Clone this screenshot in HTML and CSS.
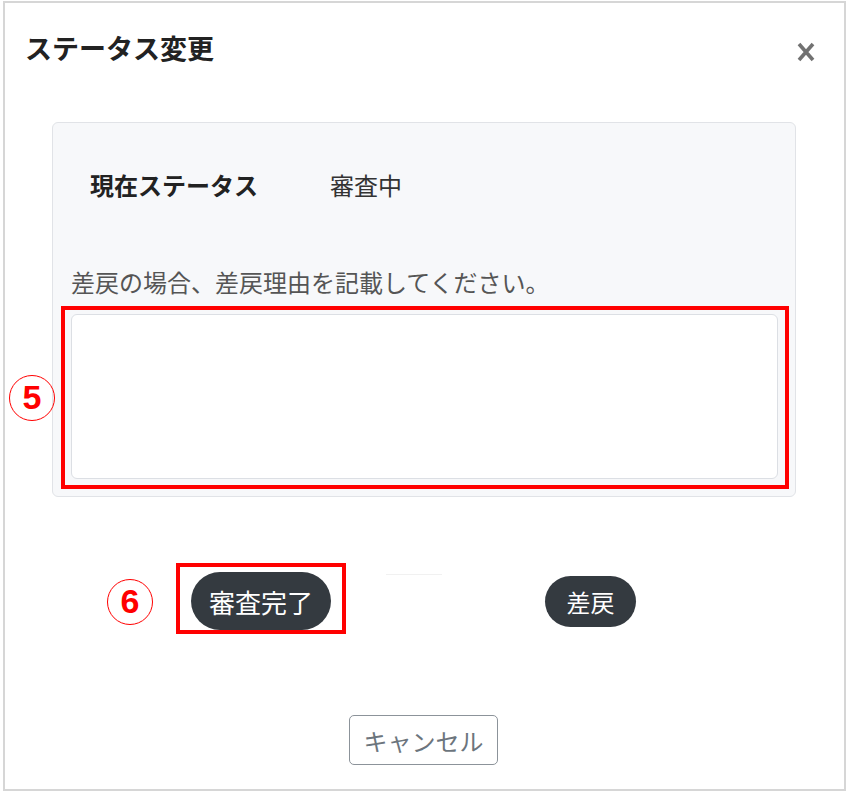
FILE: index.html
```html
<!DOCTYPE html>
<html>
<head>
  <title>ステータス変更</title>
  <link rel="stylesheet" href="styles.css">
</head>
<body>
  <div class="modal">
    <!-- Header -->
    <div class="modal-header">
      <h2 class="modal-title">ステータス変更</h2>
      <svg class="close" width="18" height="20" viewBox="0 0 18 20">
        <path d="M2 2 L16 18 M16 2 L2 18" stroke="#727272" stroke-width="3.6" stroke-linecap="butt" fill="none"/>
      </svg>
    </div>

    <!-- Status card -->
    <div class="card">
      <div class="status-row">
        <span class="status-label">現在ステータス</span>
        <span class="status-value">審査中</span>
      </div>
      <p class="note">差戻の場合、差戻理由を記載してください。</p>
      <div class="field">
        <textarea class="reason"></textarea>
        <span class="mark mark-field"></span>
        <span class="num num-5">5</span>
      </div>
    </div>

    <!-- Actions -->
    <div class="actions">
      <span class="btn-wrap">
        <button class="btn-dark btn-done">審査完了</button>
        <span class="mark mark-btn"></span>
        <span class="num num-6">6</span>
      </span>
      <span class="spacer"></span>
      <button class="btn-dark btn-back">差戻</button>
    </div>

    <div class="footer">
      <button class="btn-cancel">キャンセル</button>
    </div>
  </div>
</body>
</html>
```

FILE: styles.css
```css
* {
  box-sizing: border-box;
  font-family: "Noto Sans CJK JP", "Noto Sans", sans-serif;
}

body {
  margin: 0;
  background-color: #fff;
  color: #212529;
}

.modal {
  margin: 1px 0 0 3px;
  width: 843px;
  height: 790px;
  border: 2px solid #d6d6d6;
  background-color: #fff;
}

.modal-header {
  display: flex;
  justify-content: space-between;
  align-items: flex-start;
  padding: 29px 29px 0 20px;
}

.modal-title {
  margin: 0;
  font-size: 27px;
  line-height: 32px;
  font-weight: 700;
  color: #222;
}

.close {
  margin-top: 10px;
}

.card {
  margin: 58px 0 0 47px;
  width: 744px;
  padding: 44px 17px 17px 18px;
  background-color: #f7f8fa;
  border: 1px solid #e1e3e7;
  border-radius: 6px;
}

.status-row {
  display: flex;
  line-height: 36px;
  font-size: 24px;
  padding-left: 19px;
}

.status-label {
  width: 240px;
  font-weight: 700;
  color: #222;
}

.status-value {
  color: #333;
}

.note {
  margin: 62px 0 0 0;
  font-size: 24px;
  line-height: 34px;
  color: #555;
}

.field {
  position: relative;
  margin-top: 15px;
}

.reason {
  display: block;
  width: 100%;
  height: 165px;
  border: 1px solid #dcdfe4;
  border-radius: 6px;
  background-color: #fff;
  resize: none;
}

/* red annotation marks */
.mark {
  position: absolute;
  border: 4px solid #ff0000;
}

.mark-field {
  top: -8px;
  left: -10px;
  right: -11px;
  bottom: -10px;
}

.mark-btn {
  top: -9px;
  left: -15px;
  right: -15px;
  bottom: -4px;
}

.num {
  position: absolute;
  width: 46px;
  height: 46px;
  border: 1.5px solid #ff0000;
  border-radius: 50%;
  color: #ff0000;
  font-family: "Liberation Sans", Arial, sans-serif;
  font-size: 34px;
  font-weight: 700;
  line-height: 43px;
  text-align: center;
}

.num-5 {
  left: -62px;
  top: 61px;
}

.num-6 {
  left: -84px;
  top: 7px;
}

.actions {
  display: flex;
  align-items: center;
  margin-top: 75px;
  padding-left: 186px;
  height: 58px;
}

.btn-wrap {
  position: relative;
  display: flex;
}

.btn-dark {
  border: none;
  border-radius: 30px;
  background-color: #343a40;
  color: #fff;
  cursor: pointer;
  padding: 0;
}

.btn-done {
  width: 140px;
  height: 58px;
  font-size: 26px;
}

.spacer {
  width: 56px;
  height: 54px;
  margin: 0 103px 0 55px;
  border-top: 1px solid #f1f1f1;
}

.btn-back {
  width: 91px;
  height: 51px;
  font-size: 24px;
}

.footer {
  display: flex;
  justify-content: center;
  margin-top: 85px;
}

.btn-cancel {
  width: 149px;
  height: 50px;
  margin-right: 2px;
  padding: 0;
  font-size: 24px;
  color: #6c757d;
  background-color: #fff;
  border: 1.5px solid #8c939a;
  border-radius: 5px;
}
```
